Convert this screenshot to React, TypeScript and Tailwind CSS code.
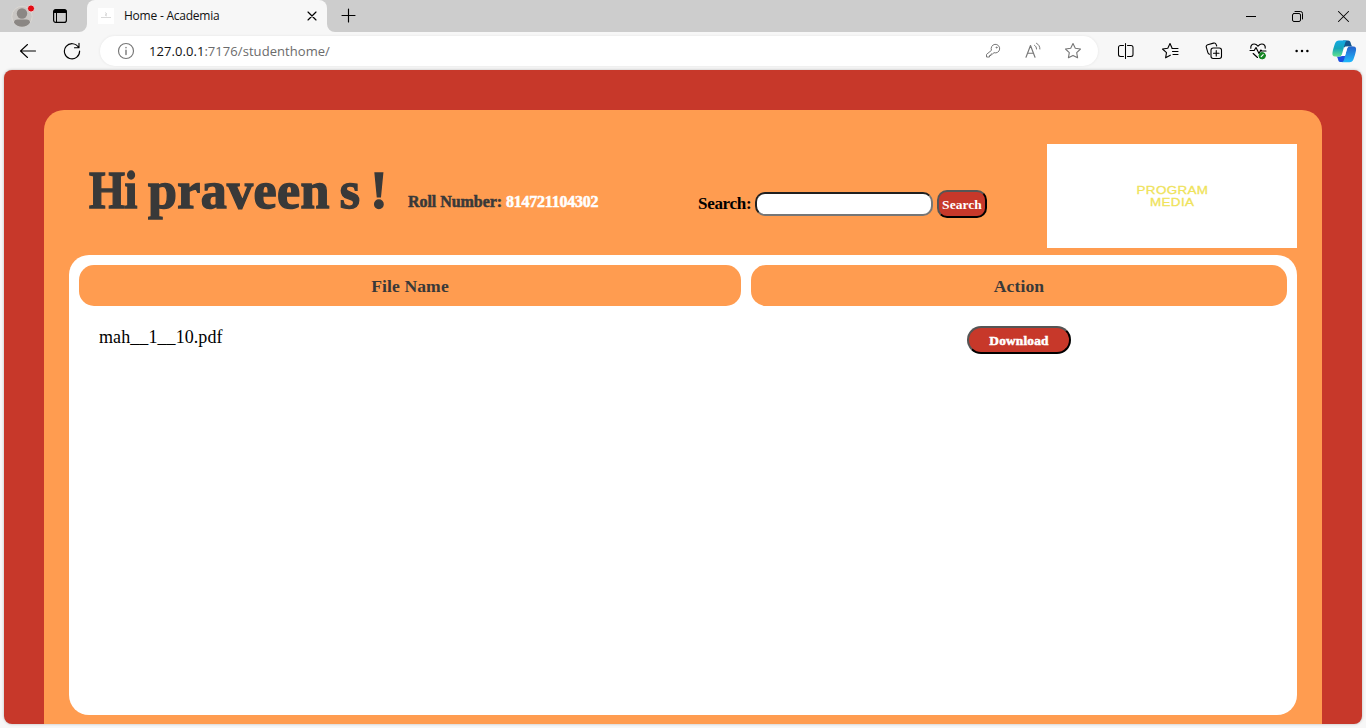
import type { ReactNode } from "react";

function Icon({ size = 18, className = "", children }: { size?: number; className?: string; children: ReactNode }) {
  return (
    <svg
      width={size}
      height={size}
      viewBox={`0 0 ${size} ${size}`}
      fill="none"
      stroke="currentColor"
      strokeLinecap="round"
      strokeLinejoin="round"
      className={`shrink-0 ${className}`}
    >
      {children}
    </svg>
  );
}

function TitleBar() {
  return (
    <div className="flex h-8 shrink-0 bg-[#cdcdcd]">
      <div className="flex w-[87px] items-center bg-[#cdcdcd] pl-[11px]">
        <svg width="24" height="24" viewBox="0 0 24 24" className="mt-px shrink-0">
          <circle cx="11" cy="11.500" r="10.200" fill="#c9c6c3" stroke="#dad7d3" />
          <circle cx="11" cy="8.500" r="5.200" fill="#8b8784" />
          <path d="M3 17.700c0-2 1.400-3.200 3.500-3.200h9c2.100 0 3.500 1.200 3.500 3.200-1.800 2.600-4.700 4.100-8 4.100s-6.200-1.500-8-4.100z" fill="#8b8784" />
          <circle cx="20" cy="3.500" r="3.600" fill="#e30b14" stroke="#e5dcdc" />
        </svg>
        <svg width="16" height="16" viewBox="0 0 16 16" fill="none" className="ml-[17px]">
          <rect x="1.600" y="1.600" width="12.800" height="12.800" rx="2.200" stroke="#000" strokeWidth="1.200" />
          <path d="M1.500 5V3.500a2 2 0 0 1 2-2h9a2 2 0 0 1 2 2V5z" fill="#000" />
          <path d="M4.500 5v9" stroke="#000" />
        </svg>
      </div>
      <div className="relative flex w-[240px] items-center rounded-t-[8px] bg-[#f7f7f7] pl-[11px]">
        <svg width="8" height="8" viewBox="0 0 8 8" className="absolute bottom-0 -left-2"><path d="M8 0v8H0a8 8 0 0 0 8-8z" fill="#f7f7f7" /></svg>
        <svg width="8" height="8" viewBox="0 0 8 8" className="absolute -right-2 bottom-0"><path d="M0 0v8h8a8 8 0 0 1-8-8z" fill="#f7f7f7" /></svg>
        <svg width="16" height="16" viewBox="0 0 16 16" fill="none" className="shrink-0">
          <path fill="#fff" d="M0 0h16v16H0z" />
          <path d="M7 4.500l2 1.500-2 1 2 1M3 9.500h10" stroke="#cfcfcf" strokeWidth=".8" />
        </svg>
        <span className="ml-[10px] w-[180px] whitespace-nowrap font-['Open_Sans','Noto_Sans',sans-serif] text-[12px] leading-4 tracking-[-0.23px] text-[#111]">Home - Academia</span>
        <Icon size={10} className="ml-[2.500px] text-black"><path d="M1 1l8 8M9 1l-8 8" strokeWidth="1.150" /></Icon>
      </div>
      <Icon size={15} className="ml-[14px] mt-[8px] text-black"><path d="M7.500 1v13M1 7.500h13" strokeWidth="1.150" /></Icon>
      <div className="ml-auto flex items-center text-black">
        <svg width="10" height="10" className="mr-[36px]"><path d="M0 5.500h10" stroke="#000" /></svg>
        <Icon size={11} className="mr-[35px]"><rect x=".5" y="2.500" width="8" height="8" rx="1.500" /><path d="M3 .5h5.500a2 2 0 0 1 2 2V8" /></Icon>
        <Icon size={11} className="mr-[17px]"><path d="M.5.5l10 10M10.500.5l-10 10" strokeWidth="1.050" /></Icon>
      </div>
    </div>
  );
}

function CopilotLogo() {
  return (
    <svg width="25" height="23" viewBox="0 0 25 23" className="shrink-0">
      <defs>
        <linearGradient id="cpLeft" x1="0" y1="0" x2="0" y2="1">
          <stop stopColor="#12a9e4" /><stop offset=".5" stopColor="#16a5b9" /><stop offset="1" stopColor="#62e38c" />
        </linearGradient>
        <linearGradient id="cpRight" x1="0" y1="0" x2="0" y2="1">
          <stop stopColor="#2462cc" /><stop offset="1" stopColor="#1fb9fb" />
        </linearGradient>
      </defs>
      <path d="M11 .5h5c2 0 2.500 1.500 3 3.500.4 1.500 1 2.500 2 2.500h-4.500L12 7.500z" fill="#12568e" />
      <path d="M13.500 22H8.300c-1.800 0-2-1.800-2.500-3.500-.4-1.300-.8-2-1.800-2h4l5-1z" fill="#1c4fe0" />
      <path d="M7 .5h8.500c-1.300 0-2 1-2.400 2.500L10 14c-.6 1.800-1.700 2.500-3.400 2.500H3c-2 0-3-1.500-2.500-4C1.100 9.200 1.900 6.500 3 3.500 3.800 1.500 5 .5 7 .5z" fill="url(#cpLeft)" />
      <path d="M17.500 22.300H9.500c1.300 0 2-1 2.500-2.500L15 9c.6-1.800 1.700-2.500 3.400-2.500h3.100c2 0 3 1.500 2.500 4-.6 3.300-1.400 5.800-2.500 8.800-.8 2-2 3-4 3z" fill="url(#cpRight)" />
      <path d="M13.600 6.500h3c-1 .5-1.400 1.400-1.700 2.500l-2 7H9c.8-.4 1.300-1.200 1.600-2.200l2-6.300c.2-.6.5-1 1-1z" fill="#fff" />
    </svg>
  );
}

const starPath = "M9 1.500l2.300 4.700 5.200.8-3.800 3.600.9 5.200L9 13.400l-4.600 2.400.9-5.200L1.500 7l5.200-.8z";

function Toolbar() {
  return (
    <div className="flex h-[38px] shrink-0 items-center bg-[#f7f7f7] pl-[19px]">
      <Icon size={17} className="text-black"><path d="M1.500 8h15M8.500 1.500L1.500 8l7 6.500" strokeWidth="1.050" /></Icon>
      <Icon size={18} className="ml-[27px] text-black"><path d="M15.600 5.500A7.600 7.600 0 1 0 16.600 9M16 1.300v4.400h-4.500" strokeWidth="1.150" /></Icon>
      <div className="ml-[19px] flex h-[30px] w-[998px] shrink-0 items-center rounded-full bg-white pl-[17px] text-[#777] shadow-[0_0_3px_rgba(0,0,0,0.08)]">
        <Icon size={18}><circle cx="9" cy="9" r="7.500" strokeWidth="1.150" /><path d="M9 8.200v4.300M9 5.400v.3" strokeWidth="1.400" /></Icon>
        <span className="ml-[14px] whitespace-nowrap font-['Open_Sans','Noto_Sans',sans-serif] text-[13px] leading-5 tracking-[0.06px] text-[#6b6b6b]"><span className="text-[#111]">127.0.0.1</span>:7176/studenthome/</span>
        <div className="ml-auto flex items-center pr-[16px]">
          <Icon size={16} className="mr-[23px]"><path d="M6.300 7A4.300 4.300 0 1 1 9 9.700L7.500 11H6v1.500H4.500V14H1.500v-2.200z" /><circle cx="11.500" cy="4.500" r=".5" /></Icon>
          <Icon size={18} className="mr-[22px]"><path d="M2 15.200L6.500 3.500 11 15.200M3.600 11.200h5.800" strokeWidth="1.150" /><path d="M10.500 3.300c1.300.8 2 2 2 3.700M12.500 1.300c2.200 1.300 3.400 3 3.400 5.700" /></Icon>
          <Icon size={18}><path d={starPath} strokeWidth="1.100" /></Icon>
        </div>
      </div>
      <div className="ml-[19px] flex items-center text-black">
        <Icon size={18}><path d="M6.500 3.500H3.500a2 2 0 0 0-2 2v7a2 2 0 0 0 2 2h3M10.500 3.500h3.500a2 2 0 0 1 2 2v7a2 2 0 0 1-2 2h-3.500M8.500 1.500v15" strokeWidth="1.050" /></Icon>
        <Icon size={18} className="ml-[26px]"><path d="M11 6.500H17M11.500 9.500H17M12 12.500H17M9.300 13.200L4.600 15.800l.9-5.200L1.500 7l5.300-.8L9 1.500l2 4.500" strokeWidth="1.100" /></Icon>
        <Icon size={18} className="ml-[26px]"><path d="M4.500 12.300A3 3 0 0 1 2.800 10.300L1.300 5.200a2 2 0 0 1 1.400-2.500L8.500 1.100A2.200 2.200 0 0 1 11.200 2.600L11.700 4" strokeWidth="1.100" /><rect x="6" y="6" width="10.500" height="10.500" rx="2.200" strokeWidth="1.100" /><path d="M11.250 8.500v5.500M8.500 11.250h5.500" strokeWidth="1.100" /></Icon>
        <Icon size={18} className="ml-[26px]"><path d="M1.800 6.200C1.500 3.800 3 2 5.200 2 7 2 8 3 9 4.200 10 3 11 2 12.800 2 15 2 16.600 3.800 16.200 6.200M1 8.500h4.200L7 5.500l3 6 1.800-3.500.9 1H17M4.200 11.500l4.300 4" strokeWidth="1.150" /><circle cx="13.200" cy="13.700" r="3.200" fill="#148522" stroke="#148522" /><path d="M12.200 14.700l2-2" stroke="#fff" strokeWidth="1.200" /></Icon>
        <svg width="14" height="4" viewBox="0 0 14 4" className="ml-[28px]" fill="#000"><circle cx="1.600" cy="2" r="1.250" /><circle cx="7" cy="2" r="1.250" /><circle cx="12.400" cy="2" r="1.250" /></svg>
        <div className="ml-[23px]"><CopilotLogo /></div>
      </div>
    </div>
  );
}

function StudentHeader() {
  return (
    <header className="flex h-[111px] items-start font-['Liberation_Serif',serif] font-bold">
      <h1 className="mt-[14px] ml-5 w-[319px] shrink-0 whitespace-nowrap text-[52px] leading-[66px] tracking-[0.4px] text-[#393939] [-webkit-text-stroke:1.4px_#393939] [word-spacing:-3.500px]"><span className="inline-block w-[49px] origin-left scale-x-[0.89] tracking-[-0.5px]">Hi</span> praveen s !</h1>
      <p className="mt-[48px] w-[290px] shrink-0 whitespace-nowrap text-[16px] leading-5 tracking-[-0.05px] text-[#393939] [-webkit-text-stroke:0.500px_currentColor]">Roll Number: <span className="tracking-[-0.25px] text-white">814721104302</span></p>
      <form className="mt-[46px] flex items-center whitespace-nowrap" onSubmit={(event) => event.preventDefault()}>
        <label htmlFor="search" className="w-[57px] text-[17px] leading-6 tracking-[-0.3px] text-black">Search:</label>
        <input id="search" className="h-6 w-[178px] rounded-[10px] border-2 border-[#767676] border-t-[#202020] border-l-[#202020] bg-white px-2 text-sm outline-none" />
        <button className="ml-1 h-7 w-[50px] rounded-[10px] border-2 border-black border-t-[#555] border-l-[#555] bg-[#c7382a] pt-px text-[13.500px] leading-5 tracking-[0.05px] text-white">Search</button>
      </form>
      <div className="ml-auto flex h-[104px] w-[250px] shrink-0 flex-col items-center justify-center bg-white font-['Liberation_Sans',sans-serif] text-[11px] leading-3 font-normal tracking-[0.3px] text-[#efe35b] [-webkit-text-stroke:0.300px_currentColor]">
        <span className="scale-x-[1.22]">PROGRAM</span>
        <span className="scale-x-[1.22]">MEDIA</span>
      </div>
    </header>
  );
}

function FileTable() {
  return (
    <section className="h-[460px] rounded-[20px] bg-white p-[10px] font-['Liberation_Serif',serif]">
      <div className="grid grid-cols-[662px_536px] gap-x-[10px] text-[17px] leading-5">
        <div className="flex h-[41px] items-center justify-center rounded-[15px] bg-[#ff9c50] text-[17.600px] font-bold tracking-[0.1px] text-[#393939]">File Name</div>
        <div className="flex h-[41px] items-center justify-center rounded-[15px] bg-[#ff9c50] text-[17.600px] font-bold tracking-[0.1px] text-[#393939]">Action</div>
        <div className="px-5 pt-[21px] text-[18px] tracking-[0.080px] text-black">mah__1__10.pdf</div>
        <div className="flex justify-center pt-[20px]">
          <button className="h-7 w-[104px] rounded-[15px] border-2 border-black border-t-[#555] border-l-[#555] bg-[#c7382a] pt-px text-[13.333px] leading-5 font-bold tracking-[0.2px] text-white [-webkit-text-stroke:0.500px_currentColor]">Download</button>
        </div>
      </div>
    </section>
  );
}

export default function App() {
  return (
    <div className="flex h-[728px] w-[1366px] flex-col overflow-hidden bg-[#f7f7f7]">
      <TitleBar />
      <Toolbar />
      <main className="mx-1 h-[654px] overflow-hidden rounded-[8px] bg-[#c7382a] px-10 pt-10 shadow-[0_0_3px_rgba(0,0,0,0.25)]">
        <div className="h-[660px] rounded-t-[20px] bg-[#ff9c50] px-[25px] pt-[34px]">
          <StudentHeader />
          <FileTable />
        </div>
      </main>
    </div>
  );
}
